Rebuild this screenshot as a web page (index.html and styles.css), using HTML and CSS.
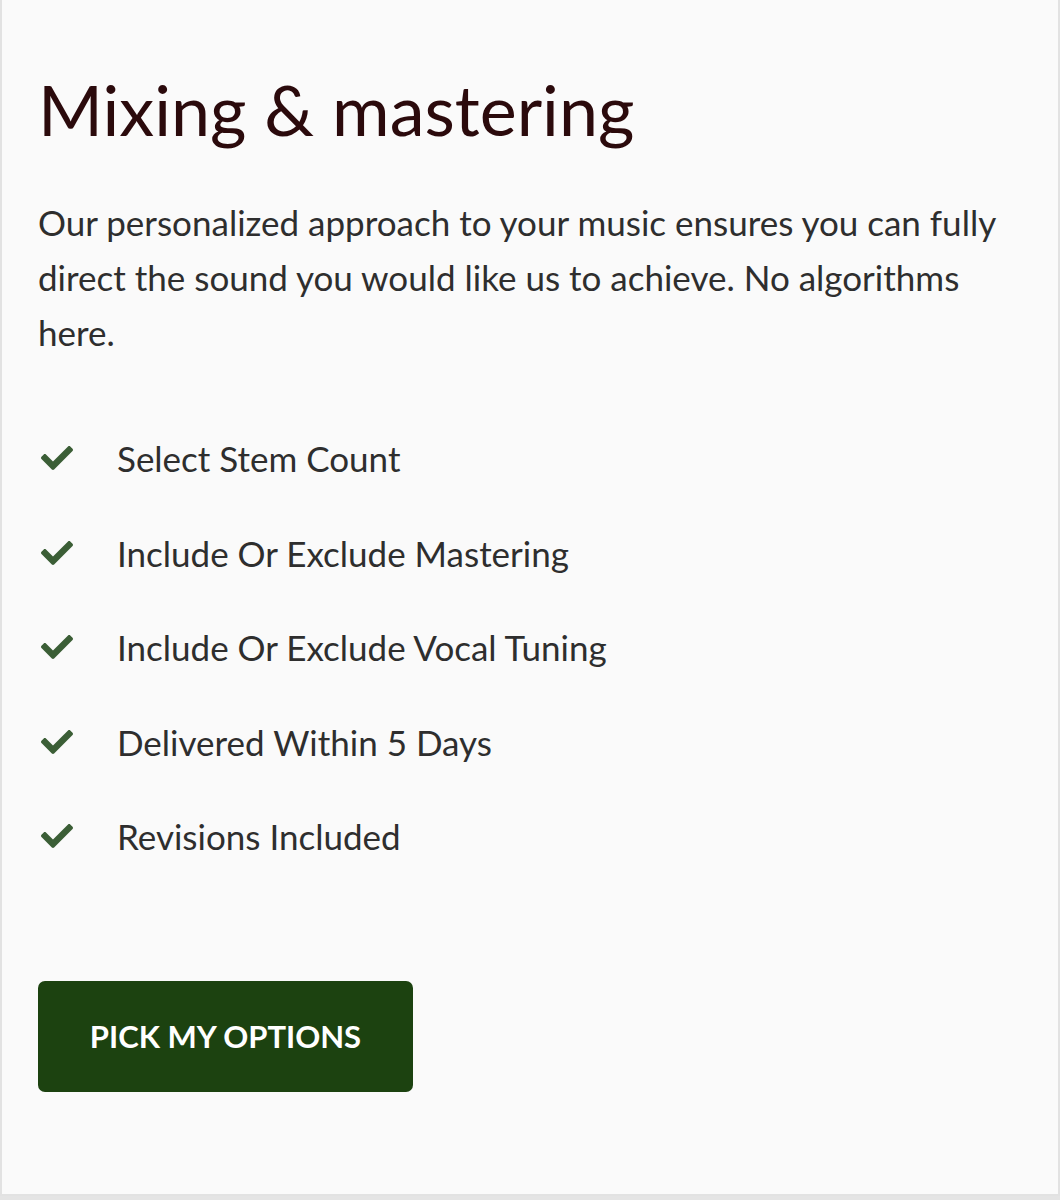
FILE: index.html
```html
<!DOCTYPE html>
<html>
<head>
<meta charset="utf-8">
<link rel="stylesheet" href="styles.css">
</head>
<body>
<div class="card">
  <h1 class="title">Mixing &amp; mastering</h1>
  <p class="desc">Our personalized approach to your music ensures you can fully direct the sound you would like us to achieve. No algorithms here.</p>
  <ul class="features">
    <li><svg class="check" viewBox="0 64 512 384"><path d="M173.898 439.404l-166.4-166.4c-9.997-9.997-9.997-26.206 0-36.204l36.203-36.204c9.997-9.998 26.207-9.998 36.204 0L192 312.69 432.095 72.596c9.997-9.997 26.207-9.997 36.204 0l36.203 36.204c9.997 9.997 9.997 26.206 0 36.204l-294.4 294.401c-9.998 9.997-26.207 9.997-36.204-.001z"/></svg><span>Select Stem Count</span></li>
    <li><svg class="check" viewBox="0 64 512 384"><path d="M173.898 439.404l-166.4-166.4c-9.997-9.997-9.997-26.206 0-36.204l36.203-36.204c9.997-9.998 26.207-9.998 36.204 0L192 312.69 432.095 72.596c9.997-9.997 26.207-9.997 36.204 0l36.203 36.204c9.997 9.997 9.997 26.206 0 36.204l-294.4 294.401c-9.998 9.997-26.207 9.997-36.204-.001z"/></svg><span>Include Or Exclude Mastering</span></li>
    <li><svg class="check" viewBox="0 64 512 384"><path d="M173.898 439.404l-166.4-166.4c-9.997-9.997-9.997-26.206 0-36.204l36.203-36.204c9.997-9.998 26.207-9.998 36.204 0L192 312.69 432.095 72.596c9.997-9.997 26.207-9.997 36.204 0l36.203 36.204c9.997 9.997 9.997 26.206 0 36.204l-294.4 294.401c-9.998 9.997-26.207 9.997-36.204-.001z"/></svg><span>Include Or Exclude Vocal Tuning</span></li>
    <li><svg class="check" viewBox="0 64 512 384"><path d="M173.898 439.404l-166.4-166.4c-9.997-9.997-9.997-26.206 0-36.204l36.203-36.204c9.997-9.998 26.207-9.998 36.204 0L192 312.69 432.095 72.596c9.997-9.997 26.207-9.997 36.204 0l36.203 36.204c9.997 9.997 9.997 26.206 0 36.204l-294.4 294.401c-9.998 9.997-26.207 9.997-36.204-.001z"/></svg><span>Delivered Within 5 Days</span></li>
    <li><svg class="check" viewBox="0 64 512 384"><path d="M173.898 439.404l-166.4-166.4c-9.997-9.997-9.997-26.206 0-36.204l36.203-36.204c9.997-9.998 26.207-9.998 36.204 0L192 312.69 432.095 72.596c9.997-9.997 26.207-9.997 36.204 0l36.203 36.204c9.997 9.997 9.997 26.206 0 36.204l-294.4 294.401c-9.998 9.997-26.207 9.997-36.204-.001z"/></svg><span>Revisions Included</span></li>
  </ul>
  <a class="btn" href="#">PICK MY OPTIONS</a>
</div>
</body>
</html>
```
FILE: styles.css
```css
html, body {
  margin: 0;
  padding: 0;
  background: #e4e4e4;
}
body {
  font-family: Lato, "Open Sans", sans-serif;
}
.card {
  box-sizing: border-box;
  width: 1060px;
  height: 1196px;
  background: #fafafa;
  border-left: 2px solid #e2e2e2;
  border-right: 2px solid #e2e2e2;
  border-bottom: 2px solid #e2e2e2;
  padding: 67px 36px 0 36px;
}
.title {
  margin: 0;
  font-size: 70px;
  font-weight: 400;
  line-height: 84px;
  color: #2b0a0c;
}
.desc {
  margin: 44px 0 0 0;
  font-size: 35px;
  line-height: 55px;
  color: #2e2e2e;
}
.features {
  list-style: none;
  margin: 51px 0 0 0;
  padding: 0;
}
.features li {
  display: flex;
  align-items: center;
  height: 94.5px;
  font-size: 35px;
  color: #2e2e2e;
}
.check {
  width: 32px;
  height: 24px;
  margin-left: 3px;
  margin-right: 44px;
  fill: #3b5e36;
  flex: none;
}
.btn {
  display: inline-flex;
  align-items: center;
  justify-content: center;
  margin-top: 97px;
  width: 375px;
  height: 111px;
  background: #1c4210;
  border-radius: 7px;
  color: #fff;
  font-size: 31px;
  font-weight: 700;
  text-decoration: none;
  box-sizing: border-box;
}
```
